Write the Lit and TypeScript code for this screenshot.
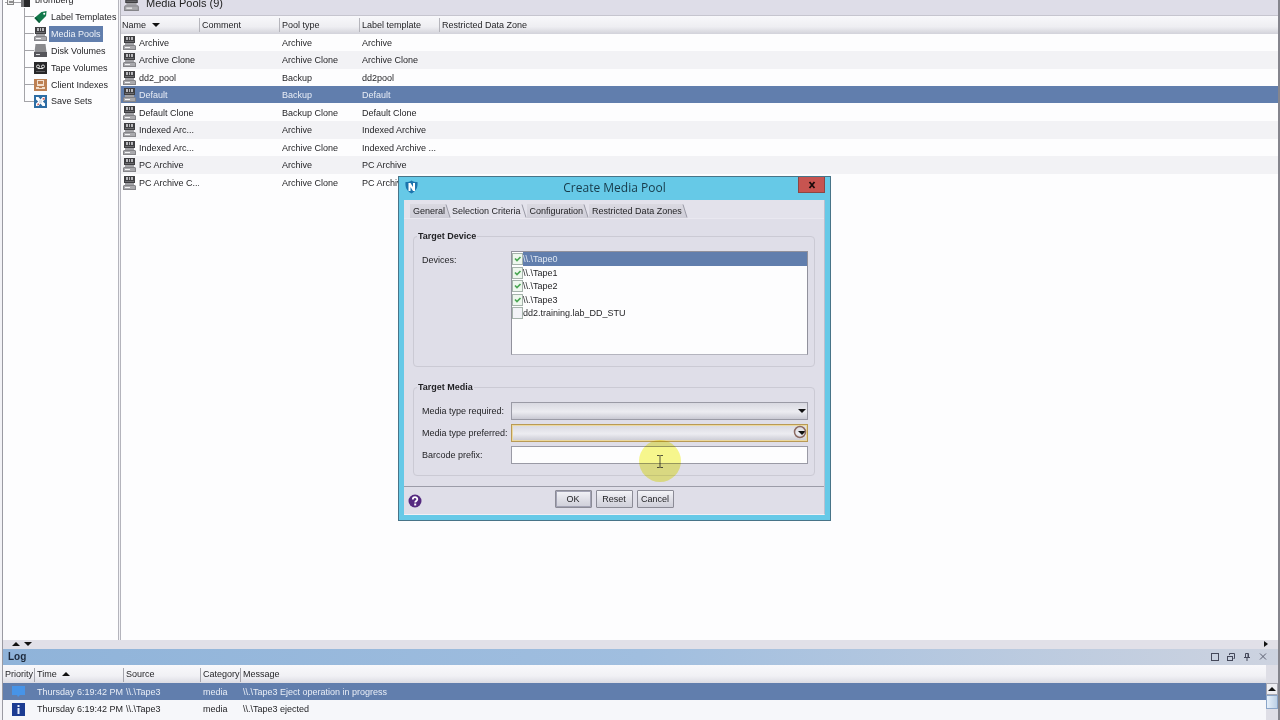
import { LitElement, html, css, svg } from "lit";
import { customElement, property, state } from "lit/decorators.js";
import { classMap } from "lit/directives/class-map.js";

const poolIcon = html`<svg class="icon" viewBox="0 0 13 14" width="13" height="14" aria-hidden="true">
  <rect x="1" y="0" width="11" height="7" fill="#3f3f42" />
  <path d="M3 1h2v3H3zM6 1h1v3H6zM8 1h2v3H8z" fill="#b9b9bd" />
  <rect x="2" y="5" width="9" height="1" fill="#6c6c70" />
  <rect x="2" y="7" width="9" height="2" fill="#a3a3a7" />
  <path d="M1 9h11l1 1v4H0v-4z" fill="#848488" />
  <rect x="1" y="10" width="11" height="3" fill="#a9a9ad" />
  <rect x="2" y="11" width="5" height="1" fill="#f4f4f5" />
</svg>`;

const treeIcons = {
  label: html`<svg class="icon" viewBox="0 0 14 14" width="14" height="14" aria-hidden="true">
    <path d="M13.500 0.500L8 1.500 0.500 8 5.500 13.500 13 6z" fill="#12784a" />
    <path d="M0.500 8L5.500 13.500 6.500 12.500 2 7z" fill="#0b5a38" />
    <circle cx="11" cy="3.500" r="1.100" fill="#fff" />
  </svg>`,
  pool: poolIcon,
  disk: html`<svg class="icon" viewBox="0 0 13 14" width="13" height="14" aria-hidden="true">
    <path d="M1.500 0h10l1 8H0.500z" fill="#8a8a8d" />
    <rect x="0" y="8" width="13" height="5" fill="#55555a" />
    <rect x="2" y="10" width="4" height="1" fill="#dddddf" />
  </svg>`,
  tape: html`<svg class="icon" viewBox="0 0 13 14" width="13" height="14" aria-hidden="true">
    <rect x="0" y="1" width="13" height="12" fill="#28282a" />
    <circle cx="4" cy="5.500" r="1.500" fill="none" stroke="#e0e0e0" />
    <circle cx="9" cy="5.500" r="1.500" fill="none" stroke="#e0e0e0" />
    <path d="M4 7.500h5" stroke="#e0e0e0" />
    <path d="M2 10.500h9" stroke="#5f5f62" />
  </svg>`,
  client: html`<svg class="icon" viewBox="0 0 13 14" width="13" height="14" aria-hidden="true">
    <rect x="0" y="1" width="13" height="12" fill="#bd8053" />
    <rect x="3" y="2" width="7" height="6" fill="#f3dfcd" />
    <rect x="4" y="3" width="5" height="3" fill="#bd8053" />
    <rect x="2" y="9" width="9" height="2" fill="#f3dfcd" />
    <rect x="5" y="9" width="3" height="1" fill="#bd8053" />
  </svg>`,
  save: html`<svg class="icon" viewBox="0 0 13 13" width="13" height="13" aria-hidden="true">
    <rect x="0" y="0" width="13" height="13" fill="#2e6da4" />
    <path d="M2 2h2.500L6.500 4.500 8.500 2H11v2.500L8.800 6.500 11 8.500V11H8.500L6.500 8.500 4.500 11H2V8.500l2.200-2L2 4.500z" fill="#fff" />
    <path d="M8 4l2.500-1.500V5zM4 8l1.500 1.500L3 10.500z" fill="#c94a44" />
    <rect x="5" y="5" width="3" height="3" fill="#d7dfe8" />
  </svg>`,
};

const triangle = (direction: "up" | "down" | "right") => {
  const d = { up: "M0 5L4 1 8 5z", down: "M0 1L4 5 8 1z", right: "M2 0L6 3 2 6z" }[direction];
  return html`<svg class="tri" viewBox="0 0 8 6" width="8" height="6" aria-hidden="true">${svg`<path d=${d} fill="#111" />`}</svg>`;
};

@customElement("nav-tree")
class NavTree extends LitElement {
  @state() private selected = "Media Pools";
  private items: [keyof typeof treeIcons, string][] = [
    ["label", "Label Templates"],
    ["pool", "Media Pools"],
    ["disk", "Disk Volumes"],
    ["tape", "Tape Volumes"],
    ["client", "Client Indexes"],
    ["save", "Save Sets"],
  ];
  static styles = css`
    :host { display: block; overflow: hidden; background: #fdfdfe; }
    .root { display: flex; align-items: center; gap: 4px; height: 17px; margin-top: -9px; padding-left: 2px; }
    ul { list-style: none; margin: 0; padding: 0 0 0 21px; }
    li { display: flex; align-items: center; height: 17px; background: linear-gradient(#a4a4a8, #a4a4a8) 0 0 / 1px 100% no-repeat; }
    li:last-child { background-size: 1px 9px; height: 16px; }
    .stub { width: 10px; height: 1px; background: #a4a4a8; flex: none; }
    button { border: 0; background: none; font: inherit; color: inherit; height: 16px; padding: 0 2px; margin-left: 2px; white-space: nowrap; }
    .on { background: #617ead; color: #eef2f8; }
    .icon { flex: none; width: 13px; }
  `;
  render() {
    return html`
      <div class="root">
        <svg viewBox="0 0 26 14" width="26" height="14" aria-hidden="true">
          <path d="M0 9.500h16" stroke="#a4a4a8" />
          <rect x="2.500" y="5.500" width="6" height="6" fill="#eee" stroke="#888" />
          <path d="M4 9h4" stroke="#333" />
          <rect x="16" y="0" width="9" height="14" fill="#29292b" />
          <rect x="16" y="0" width="3" height="14" fill="#77777a" />
        </svg>
        <span>bromberg</span>
      </div>
      <ul>
        ${this.items.map(([icon, name]) => html`<li>
          <span class="stub"></span>${treeIcons[icon]}
          <button class=${classMap({ on: name === this.selected })} @click=${() => (this.selected = name)}>${name}</button>
        </li>`)}
      </ul>`;
  }
}

@customElement("pool-list")
class PoolList extends LitElement {
  @state() private selected = 3;
  private rows = [
    ["Archive", "", "Archive", "Archive"],
    ["Archive Clone", "", "Archive Clone", "Archive Clone"],
    ["dd2_pool", "", "Backup", "dd2pool"],
    ["Default", "", "Backup", "Default"],
    ["Default Clone", "", "Backup Clone", "Default Clone"],
    ["Indexed Arc...", "", "Archive", "Indexed Archive"],
    ["Indexed Arc...", "", "Archive Clone", "Indexed Archive ..."],
    ["PC Archive", "", "Archive", "PC Archive"],
    ["PC Archive C...", "", "Archive Clone", "PC Archive"],
  ];
  static styles = css`
    :host { display: block; overflow: hidden; background: #fdfdfe; }
    h1 { display: flex; align-items: center; gap: 7px; height: 23px; box-sizing: border-box; margin: -7px 0 0; padding: 0 0 2px 3px; border-bottom: 1px solid #c6c5cf; background: #dedde8; font-size: 11px; line-height: 16px; font-weight: 400; color: #222; }
    h1 .icon { width: 15px; height: 16px; }
    table { width: 100%; table-layout: fixed; border-collapse: collapse; }
    th, td { padding: 0 0 0 3px; text-align: left; font-weight: 400; white-space: nowrap; overflow: hidden; }
    th { height: 18px; background: linear-gradient(#f8f8fb, #eeeef2 60%, #d2d2da); }
    th:first-child { padding-left: 1px; }
    th + th { background: linear-gradient(#b5b5bc, #b5b5bc) 0 2px / 1px 14px no-repeat, linear-gradient(#f8f8fb, #eeeef2 60%, #d2d2da); }
    th:nth-child(-n + 4) { width: 80px; box-sizing: border-box; }
    th:first-child { width: 78px; }
    td { height: 17px; }
    td:first-child { padding-left: 2px; }
    tr:nth-child(even) td { height: 18px; background: #f2f2f5; }
    tbody tr.on td { background: linear-gradient(#617ead, #617ead) 0 0 / 100% 17px no-repeat; color: #e8edf6; }
    .name { display: flex; align-items: center; gap: 3px; }
    .icon { flex: none; }
    .tri { margin-left: 3px; }
  `;
  render() {
    return html`
      <h1>${poolIcon}<span>Media Pools (9)</span></h1>
      <table>
        <thead><tr><th>Name ${triangle("down")}</th><th>Comment</th><th>Pool type</th><th>Label template</th><th>Restricted Data Zone</th></tr></thead>
        <tbody>
          ${this.rows.map(([name, comment, type, label], i) => html`<tr class=${classMap({ on: i === this.selected })} @click=${() => (this.selected = i)}>
            <td><span class="name">${poolIcon}${name}</span></td><td>${comment}</td><td>${type}</td><td>${label}</td><td></td>
          </tr>`)}
        </tbody>
      </table>`;
  }
}

@customElement("log-panel")
class LogPanel extends LitElement {
  @state() private selected = 0;
  private rows = [
    ["Thursday 6:19:42 PM", "\\\\.\\Tape3", "media", "\\\\.\\Tape3 Eject operation in progress"],
    ["Thursday 6:19:42 PM", "\\\\.\\Tape3", "media", "\\\\.\\Tape3 ejected"],
  ];
  static styles = css`
    :host { display: block; background: #f6f7fa; }
    header { display: flex; align-items: center; justify-content: space-between; height: 16px; padding: 0 10px 0 5px; background: linear-gradient(90deg, #8fb3d9, #a0bedf 50%, #cdd3e0); }
    h2 { margin: 0; font-size: 10px; line-height: 16px; color: #1d2a3c; }
    .tools { display: flex; gap: 6px; }
    .tools button { display: flex; padding: 0; border: 0; background: none; }
    .body { display: flex; height: 55px; overflow: hidden; }
    .grid { flex: 1; min-width: 0; }
    table { width: 100%; table-layout: fixed; border-collapse: collapse; }
    th, td { padding: 0 0 0 3px; text-align: left; font-weight: 400; white-space: nowrap; overflow: hidden; }
    th { height: 18px; background: linear-gradient(#f8f8fb, #f1f1f5 60%, #dcdce3); }
    th + th { background: linear-gradient(#a5a5ac, #a5a5ac) 0 3px / 1px 14px no-repeat, linear-gradient(#f8f8fb, #f1f1f5 60%, #dcdce3); }
    th:nth-child(-n + 4) { box-sizing: border-box; }
    th:nth-child(1) { width: 31px; padding-left: 2px; }
    th:nth-child(2) { width: 89px; }
    th:nth-child(3) { width: 77px; }
    th:nth-child(4) { width: 40px; }
    td { height: 17px; }
    tr:last-child td { height: 18px; }
    td:first-child { padding-left: 9px; }
    tr.on td { background: linear-gradient(#617ead, #617ead) 0 0 / 100% 17px no-repeat; color: #e8edf6; }
    td svg { display: block; }
    .tri { margin-left: 3px; }
    .scroll { display: flex; flex-direction: column; width: 12px; padding-top: 18px; background: #dedee6; }
    .scroll .up { height: 12px; padding: 0; border: 1px solid #a9a9b2; background: #eeeef2; display: flex; align-items: center; justify-content: center; }
    .scroll .up .tri { margin: 0; }
    .thumb { height: 12px; border: 1px solid #8aa5c8; background: linear-gradient(90deg, #e6f0fa, #bcd0e6); }
  `;
  render() {
    return html`
      <header>
        <h2>Log</h2>
        <div class="tools">
          <button aria-label="Maximize"><svg viewBox="0 0 10 10" width="10" height="10"><rect x="1.500" y="1.500" width="7" height="7" fill="none" stroke="#44485a" /></svg></button>
          <button aria-label="Float"><svg viewBox="0 0 10 10" width="10" height="10"><rect x="1.500" y="4.500" width="5" height="4" fill="none" stroke="#44485a" /><path d="M3.500 3V1.500h5v5H7.500" fill="none" stroke="#44485a" /></svg></button>
          <button aria-label="Pin"><svg viewBox="0 0 10 10" width="10" height="10"><path d="M3.500 1.500h3v4h-3zM2 5.500h6M5 6v3M6 2v3" fill="none" stroke="#44485a" /></svg></button>
          <button aria-label="Close log"><svg viewBox="0 0 10 10" width="10" height="10"><path d="M2 1.500l6 6M8 1.500l-6 6" fill="none" stroke="#5a5f70" /></svg></button>
        </div>
      </header>
      <div class="body">
        <div class="grid">
          <table>
            <thead><tr><th>Priority</th><th>Time ${triangle("up")}</th><th>Source</th><th>Category</th><th>Message</th></tr></thead>
            <tbody>
              ${this.rows.map((cells, i) => html`<tr class=${classMap({ on: i === this.selected })} @click=${() => (this.selected = i)}>
                <td>${i === 0
                  ? html`<svg viewBox="0 0 13 13" width="13" height="13" role="img" aria-label="Notice"><path d="M0 1h13v9H8l-2 2-1-2H0z" fill="#4794e8" /></svg>`
                  : html`<svg viewBox="0 0 13 13" width="13" height="13" role="img" aria-label="Information"><rect width="13" height="13" fill="#1c3c92" /><path d="M5.500 2h2v2h-2zM5.500 5h2v6h-2z" fill="#e9effc" /></svg>`}</td>
                ${cells.map((c) => html`<td>${c}</td>`)}
              </tr>`)}
            </tbody>
          </table>
        </div>
        <div class="scroll"><button class="up" aria-label="Scroll up">${triangle("up")}</button><div class="thumb"></div></div>
      </div>`;
  }
}

@customElement("pool-dialog")
class PoolDialog extends LitElement {
  @property() heading = "Create Media Pool";
  @state() private tab = "Selection Criteria";
  @state() private current = 0;
  private tabs = ["General", "Selection Criteria", "Configuration", "Restricted Data Zones"];
  private devices: [string, boolean][] = [
    ["\\\\.\\Tape0", true],
    ["\\\\.\\Tape1", true],
    ["\\\\.\\Tape2", true],
    ["\\\\.\\Tape3", true],
    ["dd2.training.lab_DD_STU", false],
  ];
  static styles = css`
    :host { display: block; box-sizing: border-box; padding: 0 5px 5px; border: 1px solid #487488; background: #66c9e7; }
    button, select, input { font: inherit; color: inherit; box-sizing: border-box; }
    header { display: grid; grid-template-columns: 27px 1fr 27px; align-items: start; height: 23px; }
    header > svg { margin: 3px 0 0 1px; }
    h2 { margin: 0; text-align: center; font: 400 12px/22px "Open Sans", "Noto Sans", sans-serif; color: #173a49; }
    .close { height: 16px; padding: 0; border: 1px solid #8d4643; border-top: 0; background: #c75450; display: flex; align-items: center; justify-content: center; }
    .panel { background: #dfdee8; border-right: 1px solid #b9c0d0; border-bottom: 1px solid #f0f0f5; }
    .tabs { display: flex; height: 18px; padding: 4px 0 0 6px; box-sizing: border-box; background: #e3e2eb; }
    .tabs button { display: flex; align-items: center; height: 14px; padding: 0 0 0 3px; border: 0; background: linear-gradient(#dad9e1, #cfced8); white-space: nowrap; }
    .tabs button.on { background: none; padding-left: 1px; }
    .content { padding: 11px 9px 10px; display: flex; flex-direction: column; gap: 14px; border-top: 1px solid #e9e8f0; }
    fieldset { margin: 0; min-width: 0; padding: 9px 6px 11px 8px; border: 1px solid #cbcad4; border-radius: 4px; }
    legend { margin-left: -5px; padding: 0 1px; font-weight: 700; line-height: 12px; }
    .row { display: grid; grid-template-columns: 89px 1fr; }
    .row > .label { padding-top: 3px; }
    .list { height: 104px; box-sizing: border-box; border: 1px solid #91919c; border-bottom-color: #b4b4be; background: #fdfdfe; }
    .list label { display: flex; height: 14px; }
    .list label:nth-child(even) { height: 13px; }
    .list label span { flex: 1; line-height: 14px; }
    .list label.on span { background: #617ead; color: #dfe7f2; }
    .list input { appearance: none; flex: none; width: 11px; height: 12px; margin: 1px 0 0; border: 1px solid #a5b3ab; background: #f2f3f7; }
    .list input:checked { background: #eef7ee url("data:image/svg+xml,%3Csvg xmlns='http://www.w3.org/2000/svg' viewBox='0 0 9 10'%3E%3Cpath d='M2 4.500l2 2L7.500 3' fill='none' stroke='%234aa653' stroke-width='1.700'/%3E%3C/svg%3E") center no-repeat; }
    .fields { display: flex; flex-direction: column; gap: 4px; }
    .field { display: grid; grid-template-columns: 89px 1fr; align-items: center; }
    .field > label { white-space: nowrap; }
    .combo { display: grid; }
    .combo > * { grid-area: 1 / 1; }
    .combo .tri { justify-self: end; align-self: center; margin-right: 2px; pointer-events: none; }
    select { appearance: none; width: 100%; height: 18px; padding: 0 4px; border: 1px solid #9a9aa5; border-radius: 0; background: linear-gradient(#d9d9e1, #ececf1 55%, #c9c9d3); }
    .focus select { border-color: #b99a55; box-shadow: inset 0 0 0 1px #ecd9a0; }
    .field input { width: 100%; height: 18px; padding: 0 3px; border: 1px solid #9a9aa5; background: #fdfdfe; }
    footer { display: grid; grid-template-columns: 1fr auto 1fr; align-items: center; height: 27px; border-top: 1px solid #9c9ca8; padding: 0 4px; }
    .help { justify-self: start; display: flex; padding: 0; border: 0; background: none; }
    .actions { display: flex; gap: 4px; margin: 0 0 3px; }
    .actions button { height: 18px; width: 37px; padding: 0; border: 1px solid #8b8b96; border-radius: 1px; background: linear-gradient(#f3f3f7, #dcdce4 60%, #cfcfd9); }
    .actions .default { box-shadow: inset 0 0 0 1px #a3a3b4; }
  `;
  render() {
    return html`
      <header>
        <svg viewBox="0 0 13 14" width="13" height="14" aria-hidden="true">
          <path d="M0.500 2C3 2 5 1.500 6.500 0.500 8 1.500 10 2 12.500 2c0.500 5-1 9-6 11.500C1.500 11 0 7 0.500 2z" fill="#1b74ad" />
          <path d="M3.500 11V3h2l2.500 4V3h2v8h-2L5.500 7v4z" fill="#fff" />
        </svg>
        <h2>${this.heading}</h2>
        <button class="close" aria-label="Close"><svg viewBox="0 0 8 8" width="8" height="8"><path d="M1.500 1l5 6M6.500 1l-5 6" stroke="#1c0b0b" stroke-width="1.800" /></svg></button>
      </header>
      <div class="panel">
        <div class="tabs" role="tablist">
          ${this.tabs.map((t) => html`<button role="tab" aria-selected=${t === this.tab} class=${classMap({ on: t === this.tab })} @click=${() => (this.tab = t)}>${t}<svg viewBox="0 0 6 14" width="6" height="14" aria-hidden="true"><path d="M1 0L5 14h1V0z" fill="#e3e2eb" /><path d="M1 0.500L5 13.500" stroke="#9a9aa6" /></svg></button>`)}
        </div>
        <div class="content">
          <fieldset>
            <legend>Target Device</legend>
            <div class="row">
              <span class="label" id="devices">Devices:</span>
              <div class="list" role="group" aria-labelledby="devices">
                ${this.devices.map(([name, checked], i) => html`<label class=${classMap({ on: i === this.current })} @click=${() => (this.current = i)}><input type="checkbox" .checked=${checked} /><span>${name}</span></label>`)}
              </div>
            </div>
          </fieldset>
          <fieldset>
            <legend>Target Media</legend>
            <div class="fields">
              <div class="field"><label for="required">Media type required:</label><div class="combo"><select id="required"><option></option></select>${triangle("down")}</div></div>
              <div class="field"><label for="preferred">Media type preferred:</label><div class="combo focus"><select id="preferred"><option></option></select>${triangle("down")}</div></div>
              <div class="field"><label for="barcode">Barcode prefix:</label><input id="barcode" type="text" /></div>
            </div>
          </fieldset>
        </div>
        <footer>
          <button class="help" aria-label="Help"><svg viewBox="0 0 14 14" width="14" height="14"><circle cx="7" cy="7" r="6.500" fill="#552a80" /><path d="M4.800 5.500C4.800 2.500 9.300 2.500 9.300 5.200 9.300 7 7.200 6.800 7.200 8.500" fill="none" stroke="#fff" stroke-width="1.800" /><rect x="6.200" y="9.500" width="2" height="2" fill="#fff" /></svg></button>
          <div class="actions"><button class="default">OK</button><button>Reset</button><button>Cancel</button></div>
        </footer>
      </div>`;
  }
}

@customElement("app-root")
class AppRoot extends LitElement {
  static styles = css`
    :host { display: grid; grid-template-rows: 1fr auto auto; position: relative; box-sizing: border-box; height: 100vh; overflow: hidden; padding: 0 0 0 2px; border-right: 2px solid #85858d; background: #f2f2f6; font: 9px/12px "Liberation Sans", Arial, sans-serif; color: #1f1f22; }
    .main { display: grid; grid-template-columns: 116px 1fr; min-height: 0; border-left: 1px solid #9a9aa2; }
    nav-tree { border-right: 1px solid #b4b4bc; }
    pool-list { border-left: 1px solid #b4b4bc; margin-left: 1px; }
    .split { display: flex; align-items: center; justify-content: space-between; height: 9px; padding: 0 8px 0 9px; border-left: 1px solid #9a9aa2; background: #e1e0e8; }
    .arrows { display: flex; gap: 4px; }
    .split .tri { margin-bottom: 1px; }
    log-panel { border-left: 1px solid #9a9aa2; }
    pool-dialog { position: absolute; left: 398px; top: 176px; width: 433px; }
    .pointer { position: absolute; left: 638px; top: 439px; mix-blend-mode: multiply; pointer-events: none; }
    .click { position: absolute; left: 793px; top: 425px; pointer-events: none; }
  `;
  render() {
    return html`
      <div class="main"><nav-tree></nav-tree><pool-list></pool-list></div>
      <div class="split"><span class="arrows">${triangle("up")}${triangle("down")}</span>${triangle("right")}</div>
      <log-panel></log-panel>
      <pool-dialog></pool-dialog>
      <svg class="click" viewBox="0 0 14 14" width="14" height="14" aria-hidden="true"><circle cx="7" cy="7" r="5.500" fill="none" stroke="#8b6a62" stroke-width="1.500" /></svg>
      <svg class="pointer" viewBox="0 0 44 44" width="44" height="44" aria-hidden="true">
        <circle cx="22" cy="22" r="21" fill="#f8f88e" />
        <path d="M19 16.500h2.500l.5.500.5-.500H25M19 28.500h2.500l.5-.500.5.500H25M22 17v11" fill="none" stroke="#55553c" />
      </svg>`;
  }
}
